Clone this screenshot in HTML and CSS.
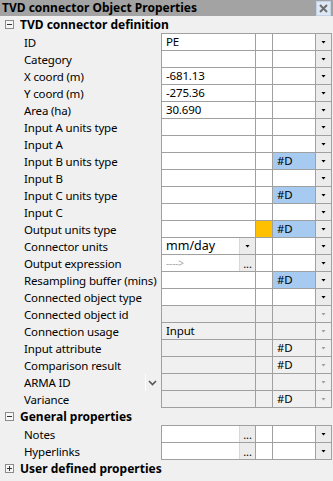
FILE: index.html
```html
<!DOCTYPE html>
<html>
<head>
<meta charset="utf-8">
<link rel="stylesheet" href="styles.css">
</head>
<body>
<div class="panel">
  <div class="titlebar">
    <span class="title">TVD connector Object Properties</span>
    <span class="close"><svg width="9" height="9" viewBox="0 0 9 9"><path d="M1 1L8 8M8 1L1 8" stroke="#6e6e6e" stroke-width="2"/></svg></span>
  </div>

  <div class="section"><span class="toggle minus"></span><span class="section-name">TVD connector definition</span></div>
  <div class="group">
    <div class="row"><div class="label">ID</div><div class="cell val">PE</div><div class="cell flag"></div><div class="cell code"></div><div class="cell btn"><i class="tri"></i></div></div>
    <div class="row"><div class="label">Category</div><div class="cell val"></div><div class="cell flag"></div><div class="cell code"></div><div class="cell btn"><i class="tri"></i></div></div>
    <div class="row"><div class="label">X coord (m)</div><div class="cell val">-681.13</div><div class="cell flag"></div><div class="cell code"></div><div class="cell btn"><i class="tri"></i></div></div>
    <div class="row"><div class="label">Y coord (m)</div><div class="cell val">-275.36</div><div class="cell flag"></div><div class="cell code"></div><div class="cell btn"><i class="tri"></i></div></div>
    <div class="row"><div class="label">Area (ha)</div><div class="cell val">30.690</div><div class="cell flag"></div><div class="cell code"></div><div class="cell btn"><i class="tri"></i></div></div>
    <div class="row"><div class="label">Input A units type</div><div class="cell val"></div><div class="cell flag"></div><div class="cell code"></div><div class="cell btn"><i class="tri"></i></div></div>
    <div class="row"><div class="label">Input A</div><div class="cell val"></div><div class="cell flag"></div><div class="cell code"></div><div class="cell btn"><i class="tri"></i></div></div>
    <div class="row"><div class="label">Input B units type</div><div class="cell val"></div><div class="cell flag"></div><div class="cell code blue">#D</div><div class="cell btn"><i class="tri"></i></div></div>
    <div class="row"><div class="label">Input B</div><div class="cell val"></div><div class="cell flag"></div><div class="cell code"></div><div class="cell btn"><i class="tri"></i></div></div>
    <div class="row"><div class="label">Input C units type</div><div class="cell val"></div><div class="cell flag"></div><div class="cell code blue">#D</div><div class="cell btn"><i class="tri"></i></div></div>
    <div class="row"><div class="label">Input C</div><div class="cell val"></div><div class="cell flag"></div><div class="cell code"></div><div class="cell btn"><i class="tri"></i></div></div>
    <div class="row"><div class="label">Output units type</div><div class="cell val"></div><div class="cell flag orange"></div><div class="cell code blue">#D</div><div class="cell btn"><i class="tri"></i></div></div>
    <div class="row"><div class="label">Connector units</div><div class="cell val split"><span class="val-text big">mm/day</span><span class="inner-btn"><i class="tri"></i></span></div><div class="cell flag"></div><div class="cell code"></div><div class="cell btn"><i class="tri"></i></div></div>
    <div class="row"><div class="label">Output expression</div><div class="cell val split"><span class="val-text hint">----&gt;</span><span class="inner-btn dots">...</span></div><div class="cell flag"></div><div class="cell code"></div><div class="cell btn"><i class="tri"></i></div></div>
    <div class="row"><div class="label">Resampling buffer (mins)</div><div class="cell val"></div><div class="cell flag"></div><div class="cell code blue">#D</div><div class="cell btn"><i class="tri"></i></div></div>
    <div class="row"><div class="label">Connected object type</div><div class="cell val"></div><div class="cell flag"></div><div class="cell code"></div><div class="cell btn"><i class="tri"></i></div></div>
    <div class="row off"><div class="label">Connected object id</div><div class="cell val"></div><div class="cell flag"></div><div class="cell code"></div><div class="cell btn"><i class="tri"></i></div></div>
    <div class="row off"><div class="label">Connection usage</div><div class="cell val">Input</div><div class="cell flag"></div><div class="cell code"></div><div class="cell btn"><i class="tri"></i></div></div>
    <div class="row off"><div class="label">Input attribute</div><div class="cell val"></div><div class="cell flag"></div><div class="cell code">#D</div><div class="cell btn"><i class="tri"></i></div></div>
    <div class="row off"><div class="label">Comparison result</div><div class="cell val"></div><div class="cell flag"></div><div class="cell code">#D</div><div class="cell btn"><i class="tri"></i></div></div>
    <div class="row off"><div class="label">ARMA ID<span class="chev"><svg width="9" height="6" viewBox="0 0 9 6"><path d="M1 1L4.5 4.5L8 1" fill="none" stroke="#555" stroke-width="1.6"/></svg></span></div><div class="cell val"></div><div class="cell flag"></div><div class="cell code"></div><div class="cell btn"><i class="tri"></i></div></div>
    <div class="row off"><div class="label">Variance</div><div class="cell val"></div><div class="cell flag"></div><div class="cell code">#D</div><div class="cell btn"><i class="tri"></i></div></div>
  </div>

  <div class="section"><span class="toggle minus"></span><span class="section-name">General properties</span></div>
  <div class="group">
    <div class="row"><div class="label">Notes</div><div class="cell val split"><span class="val-text"></span><span class="inner-btn dots">...</span></div><div class="cell flag"></div><div class="cell code"></div><div class="cell btn"><i class="tri"></i></div></div>
    <div class="row"><div class="label">Hyperlinks</div><div class="cell val split"><span class="val-text"></span><span class="inner-btn dots">...</span></div><div class="cell flag"></div><div class="cell code"></div><div class="cell btn"><i class="tri"></i></div></div>
  </div>

  <div class="section"><span class="toggle plus"></span><span class="section-name">User defined properties</span></div>
</div>
</body>
</html>
```

FILE: styles.css
```css
* { box-sizing: border-box; }
html, body { margin: 0; padding: 0; }
body {
  background: #f0f0f0;
  font-family: "Noto Sans", "Open Sans", sans-serif;
  font-size: 12px;
  color: #000;
}
.panel {
  width: 333px;
  height: 481px;
  background: #f0f0f0;
  overflow: hidden;
}
.titlebar {
  height: 16px;
  background: #a3a3a3;
  display: flex;
  align-items: center;
  justify-content: space-between;
  padding: 0 2px 0 2px;
}
.title {
  font-weight: bold;
  line-height: 16px;
  white-space: nowrap;
}
.close {
  width: 15px;
  height: 15px;
  margin-top: 1px;
  background: #dde8f4;
  border: 1px solid #c3d2e4;
  display: flex;
  align-items: center;
  justify-content: center;
}
.section {
  height: 17px;
  display: flex;
  align-items: center;
  padding-left: 5px;
  gap: 6px;
  font-weight: bold;
  line-height: 17px;
}
.toggle {
  width: 9px;
  height: 9px;
  border: 1px solid #8c8c8c;
  background: #f6f6f6;
  position: relative;
  flex: none;
}
.toggle::before {
  content: "";
  position: absolute;
  left: 1px;
  top: 3px;
  width: 5px;
  height: 1px;
  background: #333;
}
.toggle.plus::after {
  content: "";
  position: absolute;
  left: 3px;
  top: 1px;
  width: 1px;
  height: 5px;
  background: #333;
}
.group .row:first-child .cell { border-top: 1px solid #a0a0a0; height: 18px; }
.row {
  display: grid;
  grid-template-columns: 161px 94px 17px 43px 17px;
  height: 17px;
  font-size: 11.5px;
  letter-spacing: -0.15px;
}
.group .row:first-child { height: 18px; }
.label {
  padding-left: 24px;
  line-height: 17px;
  white-space: nowrap;
  position: relative;
}
.group .row:first-child .label { padding-top: 1px; }
.cell {
  height: 17px;
  border-left: 1px solid #a0a0a0;
  border-bottom: 1px solid #a0a0a0;
  background: #fff;
  line-height: 16px;
  padding-left: 4px;
  white-space: nowrap;
  overflow: hidden;
}
.cell.btn {
  border-right: 1px solid #a0a0a0;
  background: #ececec;
  padding: 0;
  display: flex;
  align-items: center;
  justify-content: center;
}
.tri {
  display: block;
  width: 5px;
  height: 3px;
  background: #000;
  clip-path: polygon(0 0, 100% 0, 50% 100%);
}
.blue { background: #a6caf0; }
.orange { background: #ffc000; }
.row.off .cell { background: #f0f0f0; }
.row.off .tri { background: #a0a0a0; }
.cell.split {
  display: flex;
  padding-left: 0;
}
.val-text {
  flex: 1;
  padding-left: 4px;
}
.val-text.big { font-size: 12.5px; letter-spacing: 0; }
.val-text.hint { color: #a8a8a8; font-size: 10px; }
.inner-btn {
  width: 16px;
  flex: none;
  border-left: 1px solid #d8d8d8;
  background: #ececec;
  display: flex;
  align-items: center;
  justify-content: center;
}
.inner-btn.dots {
  align-items: flex-end;
  line-height: 10px;
  font-size: 11px;
  padding-bottom: 2px;
}
.chev {
  position: absolute;
  left: 145px;
  top: 0;
  height: 17px;
  width: 12px;
  border-left: 1px solid #fff;
  display: flex;
  align-items: center;
  justify-content: flex-end;
}
```
